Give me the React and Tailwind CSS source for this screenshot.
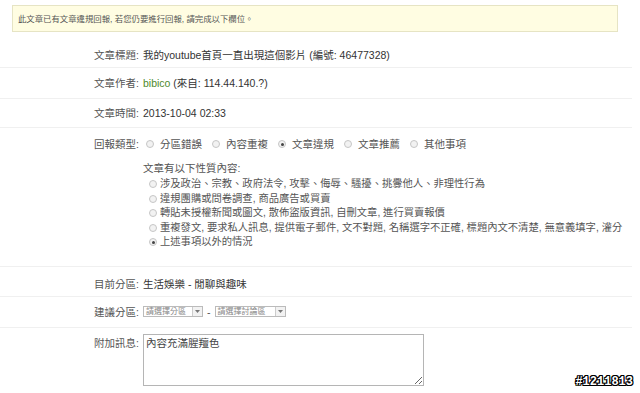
import React from "react";

const font = "font-['Liberation_Sans','Noto_Sans_CJK_TC',sans-serif]";

function Radio({ checked }) {
  return (
    <span className="inline-flex w-[8px] h-[8px] rounded-full border border-[#c6c6c6] bg-[#f2f2f2] items-center justify-center shrink-0">
      {checked && <span className="w-[3px] h-[3px] rounded-full bg-[#444]" />}
    </span>
  );
}

function Row({ label, children, className = "" }) {
  return (
    <div className={`flex border-b border-[#f0f0f0] ${className}`}>
      <div className="w-[139px] shrink-0 text-right text-[#555]">{label}</div>
      <div className="flex-1 pl-[4px] text-[#333]">{children}</div>
    </div>
  );
}

function Select({ text, width }) {
  return (
    <span className={`inline-flex h-[11px] items-stretch border border-[#bbb] bg-white ${width}`}>
      <span className="flex-1 px-[2px] text-[8px] leading-[9px] text-[#888]">{text}</span>
      <span className="w-[10px] border-l border-[#ccc] bg-[#f2f2f2] flex items-center justify-center">
        <svg width="5" height="3" viewBox="0 0 5 3">
          <path d="M0 0h5L2.5 3z" fill="#777" />
        </svg>
      </span>
    </span>
  );
}

const types = [
  { label: "分區錯誤" },
  { label: "內容重複" },
  { label: "文章違規", checked: true },
  { label: "文章推薦" },
  { label: "其他事項" },
];

const reasons = [
  { label: "涉及政治、宗教、政府法令, 攻擊、侮辱、騷擾、挑釁他人、非理性行為" },
  { label: "違規團購或問卷調查, 商品廣告或買賣" },
  { label: "轉貼未授權新聞或圖文, 散佈盜版資訊, 自刪文章, 進行買賣報價" },
  { label: "重複發文, 要求私人訊息, 提供電子郵件, 文不對題, 名稱選字不正確, 標題內文不清楚, 無意義填字, 灌分" },
  { label: "上述事項以外的情況", checked: true },
];

export default function App() {
  return (
    <div className={`relative w-[640px] h-[393px] overflow-hidden bg-white text-[10.5px] leading-[14px] ${font}`}>
      <div className="ml-[12px] mt-[5px] w-[606px] h-[27px] border border-[#e6e4c4] bg-[#fffde2] flex items-center pl-[5px] text-[8.4px] text-[#555]">
        此文章已有文章違規回報, 若您仍要進行回報, 請完成以下欄位。
      </div>

      <div className="w-[632px] mt-[8px]">
        <Row label="文章標題:" className="pt-[8px] pb-[5px]">
          我的youtube首頁一直出現這個影片 (編號: 46477328)
        </Row>
        <Row label="文章作者:" className="pt-[8px] pb-[8px]">
          <span className="text-[#4e8a2c]">bibico</span> (來自: 114.44.140.?)
        </Row>
        <Row label="文章時間:" className="pt-[7px] pb-[7px]">
          2013-10-04 02:33
        </Row>
        <Row label="回報類型:" className="pt-[9px] pb-[16px]">
          <div className="flex items-center pl-[3px]">
            {types.map((t) => (
              <span key={t.label} className="flex items-center gap-[6px] mr-[10px] text-[#555]">
                <Radio checked={t.checked} />
                {t.label}
              </span>
            ))}
          </div>
          <div className="mt-[10px] text-[#555]">文章有以下性質內容:</div>
          <div className="mt-[2px] pl-[6px] text-[10.3px] text-[#555]">
            {reasons.map((r) => (
              <div key={r.label} className="flex items-center gap-[3px] leading-[14.5px] whitespace-nowrap">
                <Radio checked={r.checked} />
                {r.label}
              </div>
            ))}
          </div>
        </Row>
        <Row label="目前分區:" className="pt-[10px] pb-[5px]">
          生活娛樂 - 閒聊與趣味
        </Row>
        <Row label="建議分區:" className="pt-[8px] pb-[8px]">
          <div className="flex items-center h-[14px]">
            <Select text="請選擇分區" width="w-[60px]" />
            <span className="mx-[4px] text-[#555]">-</span>
            <Select text="請選擇討論區" width="w-[71px]" />
          </div>
        </Row>
        <div className="flex pt-[6px]">
          <div className="w-[139px] shrink-0 text-right text-[#555] pt-[2px]">附加訊息:</div>
          <div className="pl-[4px]">
            <textarea
              defaultValue="內容充滿腥羶色"
              className="block w-[281px] h-[52px] border border-[#b5b5b5] px-[2px] py-[1px] text-[10.5px] leading-[14px] text-[#444] resize"
            />
          </div>
        </div>
      </div>

      <div className="absolute right-[7px] bottom-[5px] font-['Liberation_Mono',monospace] font-bold text-[12px] leading-[12px] text-white [text-shadow:1px_0_0_#000,-1px_0_0_#000,0_1px_0_#000,0_-1px_0_#000,1px_1px_0_#000,-1px_-1px_0_#000,1px_-1px_0_#000,-1px_1px_0_#000]">
        #1211813
      </div>
    </div>
  );
}
